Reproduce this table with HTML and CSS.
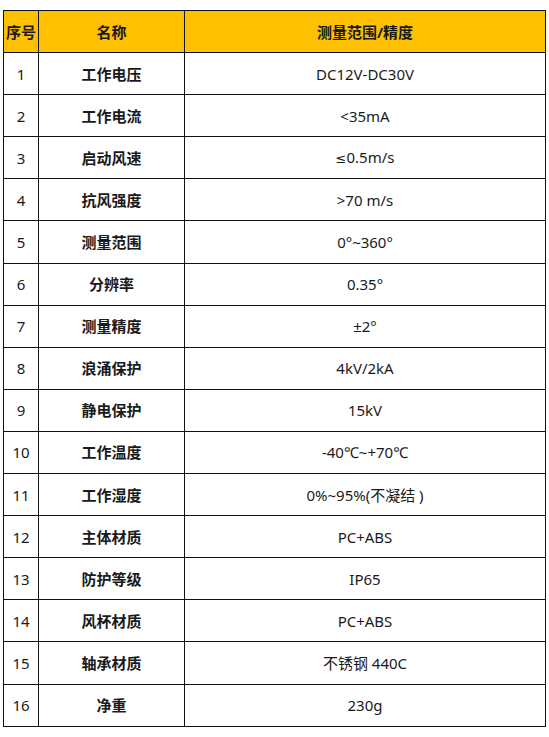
FILE: index.html
```html
<!DOCTYPE html>
<html lang="zh">
<head>
<meta charset="utf-8">
<link rel="stylesheet" href="styles.css">
</head>
<body>
<table class="spec">
  <colgroup><col class="c-no"><col class="c-name"><col class="c-val"></colgroup>
  <thead>
    <tr><th>序号</th><th>名称</th><th>测量范围/精度</th></tr>
  </thead>
  <tbody>
    <tr><td>1</td><td class="nm">工作电压</td><td>DC12V-DC30V</td></tr>
    <tr><td>2</td><td class="nm">工作电流</td><td>&lt;35mA</td></tr>
    <tr><td>3</td><td class="nm">启动风速</td><td><span class="sym">≤</span>0.5m/s</td></tr>
    <tr><td>4</td><td class="nm">抗风强度</td><td>&gt;70 m/s</td></tr>
    <tr><td>5</td><td class="nm">测量范围</td><td>0°~360°</td></tr>
    <tr><td>6</td><td class="nm">分辨率</td><td>0.35°</td></tr>
    <tr><td>7</td><td class="nm">测量精度</td><td>±2°</td></tr>
    <tr><td>8</td><td class="nm">浪涌保护</td><td>4kV/2kA</td></tr>
    <tr><td>9</td><td class="nm">静电保护</td><td>15kV</td></tr>
    <tr><td>10</td><td class="nm">工作温度</td><td>-40℃~+70℃</td></tr>
    <tr><td>11</td><td class="nm">工作湿度</td><td>0%~95%(不凝结 )</td></tr>
    <tr><td>12</td><td class="nm">主体材质</td><td>PC+ABS</td></tr>
    <tr><td>13</td><td class="nm">防护等级</td><td>IP65</td></tr>
    <tr><td>14</td><td class="nm">风杯材质</td><td>PC+ABS</td></tr>
    <tr><td>15</td><td class="nm">轴承材质</td><td>不锈钢 440C</td></tr>
    <tr><td>16</td><td class="nm">净重</td><td>230g</td></tr>
  </tbody>
</table>
</body>
</html>
```
FILE: styles.css
```css
html, body {
  margin: 0;
  padding: 0;
  background: #fff;
}
body {
  font-family: "Noto Sans", "Noto Sans CJK SC", sans-serif;
  font-size: 15px;
  color: #1a1a1a;
}
.spec {
  border-collapse: collapse;
  margin: 10px 0 0 3px;
  width: 542px;
  table-layout: fixed;
}
.c-no { width: 35px; }
.c-name { width: 146px; }
.c-val { width: 361px; }
.spec th,
.spec td {
  border: 1px solid #111;
  text-align: center;
  vertical-align: middle;
  padding: 0;
  height: 41.1px;
  line-height: 20px;
}
.spec th {
  background: #ffc000;
  font-weight: bold;
}
.spec td.nm {
  font-weight: bold;
}
.sym {
  font-family: "DejaVu Sans", "Liberation Sans", sans-serif;
  font-size: 13px;
}
```
